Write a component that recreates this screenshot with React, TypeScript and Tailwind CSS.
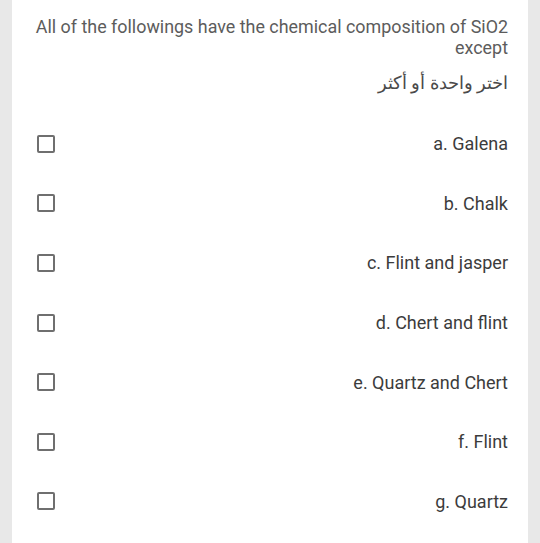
import React from 'react';

const options = [
  'a. Galena',
  'b. Chalk',
  'c. Flint and jasper',
  'd. Chert and flint',
  'e. Quartz and Chert',
  'f. Flint',
  'g. Quartz',
];

export default function App() {
  return (
    <div className="min-h-[543px] bg-[#e8e8e8] px-[12px]" style={{ fontFamily: 'Roboto, "Noto Sans", sans-serif' }}>
      <div className="min-h-[543px] bg-white pl-[25px] pr-[20px] pt-[16px]">
        <p className="-ml-[6px] text-right text-[17.9px] leading-[21px] text-[#5c5c5c]">
          All of the followings have the chemical composition of SiO2 except
        </p>
        <p dir="rtl" className="mt-[14px] text-right text-[18px] leading-[22px] text-[#4a4a4a]">
          اختر واحدة أو أكثر
        </p>
        <div className="mt-[20px] flex flex-col">
          {options.map((o) => (
            <label key={o} className="flex h-[59.6px] items-center justify-between">
              <span className="h-[18px] w-[18px] rounded-[2px] border-2 border-[#6f6f6f]" />
              <span className="text-[18px] text-[#3c3c3c]">{o}</span>
            </label>
          ))}
        </div>
      </div>
    </div>
  );
}
